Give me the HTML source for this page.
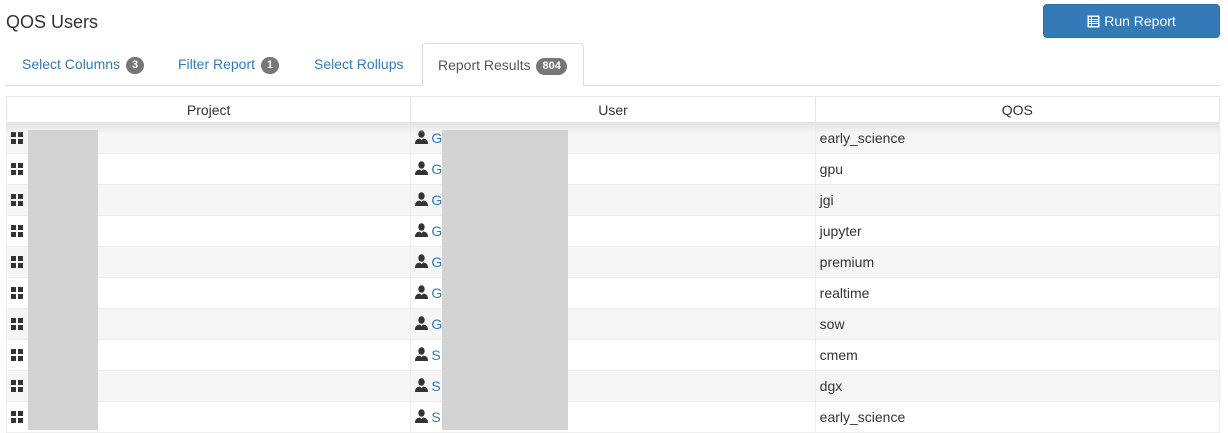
<!DOCTYPE html>
<html><head><meta charset="utf-8"><style>
*{box-sizing:border-box;margin:0;padding:0}
body{width:1228px;height:418px;overflow:hidden;background:#fff;font-family:"Liberation Sans",Arial,sans-serif;font-size:14px;color:#333;position:relative}
.title{position:absolute;left:6px;top:12px;font-size:18px;color:#333}
.btn{position:absolute;left:1043px;top:4px;width:177px;height:34px;background:#337ab7;border:1px solid #2e6da4;border-radius:4px;color:#fff;font-size:14px;display:flex;align-items:center;justify-content:center;gap:4px}
.tabs{position:absolute;left:6px;top:85px;width:1214px;border-top:1px solid #ddd}
.tab{position:absolute;top:56px;font-size:14px;color:#337ab7;white-space:nowrap}
.badge{display:inline-block;background:#777;color:#fff;font-size:11px;font-weight:bold;border-radius:10px;padding:2px 6px;line-height:13px;vertical-align:1px;margin-left:2px}
.active{position:absolute;left:422px;top:43px;width:162px;height:43px;border:1px solid #ddd;border-bottom:none;border-radius:4px 4px 0 0;background:#fff;padding:13px 0 0 15px;color:#555}
table{position:absolute;left:6px;top:96px;width:1214px;border-collapse:collapse;table-layout:fixed}
th{height:26px;font-weight:normal;border:1px solid #e6e6e6;font-size:14px;text-align:center;background:#fff}
td{height:31px;border:1px solid #eee;padding:0 4px;font-size:14px;vertical-align:middle}
tbody tr:nth-child(odd) td{background:#f6f6f6}
.shadow{position:absolute;left:7px;top:122px;width:1212px;height:12px;background:linear-gradient(#e2e2e2,rgba(246,246,246,0))}
.grid{display:inline-block;width:12px;height:12px;vertical-align:-1px;background:
linear-gradient(#333,#333) 0 0/5px 5px no-repeat,linear-gradient(#333,#333) 7px 0/5px 5px no-repeat,linear-gradient(#333,#333) 0 7px/5px 5px no-repeat,linear-gradient(#333,#333) 7px 7px/5px 5px no-repeat}
a{color:#337ab7;text-decoration:none}
.u{display:inline-block;vertical-align:-1px;margin-right:3px}
.blk{position:absolute;background:#d3d3d3}
</style></head><body>
<div class="title">QOS Users</div>
<div class="btn"><svg width="13" height="13" viewBox="0 0 13 13"><rect x="0.5" y="0.5" width="12" height="12" fill="#fff"/><rect x="2" y="2" width="9" height="9" fill="#337ab7"/><g fill="#fff"><rect x="2" y="4" width="9" height="1"/><rect x="2" y="6" width="9" height="1"/><rect x="2" y="8" width="9" height="1"/><rect x="4" y="2" width="1" height="9"/></g></svg>Run Report</div>
<div class="tabs"></div>
<div class="tab" style="left:22px">Select Columns <span class="badge">3</span></div>
<div class="tab" style="left:178px">Filter Report <span class="badge">1</span></div>
<div class="tab" style="left:314px">Select Rollups</div>
<div class="active">Report Results <span class="badge">804</span></div>
<table>
<thead><tr><th>Project</th><th>User</th><th>QOS</th></tr></thead>
<tbody>
<tr><td><span class="grid"></span></td><td><svg class="u" width="13" height="14" viewBox="0 0 13 14"><ellipse cx="6.5" cy="4" rx="3.2" ry="3.8" fill="#333"/><path d="M0 14C0 10 2 9 4.5 8.5L6.5 10L8.5 8.5C11 9 13 10 13 14Z" fill="#333"/></svg><a>G</a></td><td>early_science</td></tr>
<tr><td><span class="grid"></span></td><td><svg class="u" width="13" height="14" viewBox="0 0 13 14"><ellipse cx="6.5" cy="4" rx="3.2" ry="3.8" fill="#333"/><path d="M0 14C0 10 2 9 4.5 8.5L6.5 10L8.5 8.5C11 9 13 10 13 14Z" fill="#333"/></svg><a>G</a></td><td>gpu</td></tr>
<tr><td><span class="grid"></span></td><td><svg class="u" width="13" height="14" viewBox="0 0 13 14"><ellipse cx="6.5" cy="4" rx="3.2" ry="3.8" fill="#333"/><path d="M0 14C0 10 2 9 4.5 8.5L6.5 10L8.5 8.5C11 9 13 10 13 14Z" fill="#333"/></svg><a>G</a></td><td>jgi</td></tr>
<tr><td><span class="grid"></span></td><td><svg class="u" width="13" height="14" viewBox="0 0 13 14"><ellipse cx="6.5" cy="4" rx="3.2" ry="3.8" fill="#333"/><path d="M0 14C0 10 2 9 4.5 8.5L6.5 10L8.5 8.5C11 9 13 10 13 14Z" fill="#333"/></svg><a>G</a></td><td>jupyter</td></tr>
<tr><td><span class="grid"></span></td><td><svg class="u" width="13" height="14" viewBox="0 0 13 14"><ellipse cx="6.5" cy="4" rx="3.2" ry="3.8" fill="#333"/><path d="M0 14C0 10 2 9 4.5 8.5L6.5 10L8.5 8.5C11 9 13 10 13 14Z" fill="#333"/></svg><a>G</a></td><td>premium</td></tr>
<tr><td><span class="grid"></span></td><td><svg class="u" width="13" height="14" viewBox="0 0 13 14"><ellipse cx="6.5" cy="4" rx="3.2" ry="3.8" fill="#333"/><path d="M0 14C0 10 2 9 4.5 8.5L6.5 10L8.5 8.5C11 9 13 10 13 14Z" fill="#333"/></svg><a>G</a></td><td>realtime</td></tr>
<tr><td><span class="grid"></span></td><td><svg class="u" width="13" height="14" viewBox="0 0 13 14"><ellipse cx="6.5" cy="4" rx="3.2" ry="3.8" fill="#333"/><path d="M0 14C0 10 2 9 4.5 8.5L6.5 10L8.5 8.5C11 9 13 10 13 14Z" fill="#333"/></svg><a>G</a></td><td>sow</td></tr>
<tr><td><span class="grid"></span></td><td><svg class="u" width="13" height="14" viewBox="0 0 13 14"><ellipse cx="6.5" cy="4" rx="3.2" ry="3.8" fill="#333"/><path d="M0 14C0 10 2 9 4.5 8.5L6.5 10L8.5 8.5C11 9 13 10 13 14Z" fill="#333"/></svg><a>S</a></td><td>cmem</td></tr>
<tr><td><span class="grid"></span></td><td><svg class="u" width="13" height="14" viewBox="0 0 13 14"><ellipse cx="6.5" cy="4" rx="3.2" ry="3.8" fill="#333"/><path d="M0 14C0 10 2 9 4.5 8.5L6.5 10L8.5 8.5C11 9 13 10 13 14Z" fill="#333"/></svg><a>S</a></td><td>dgx</td></tr>
<tr><td><span class="grid"></span></td><td><svg class="u" width="13" height="14" viewBox="0 0 13 14"><ellipse cx="6.5" cy="4" rx="3.2" ry="3.8" fill="#333"/><path d="M0 14C0 10 2 9 4.5 8.5L6.5 10L8.5 8.5C11 9 13 10 13 14Z" fill="#333"/></svg><a>S</a></td><td>early_science</td></tr>
</tbody></table>
<div class="shadow"></div>
<div class="blk" style="left:28px;top:130px;width:70px;height:300px"></div>
<div class="blk" style="left:442px;top:130px;width:126px;height:300px"></div>
</body></html>
